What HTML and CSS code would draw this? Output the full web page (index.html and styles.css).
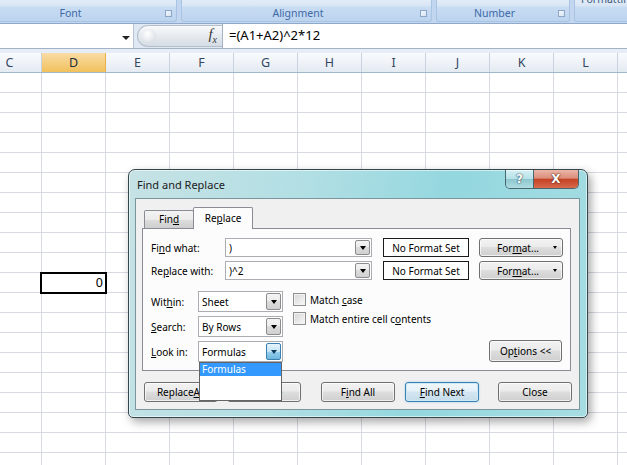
FILE: index.html
```html
<!DOCTYPE html>
<html>
<head>
<meta charset="utf-8">
<title>Find and Replace</title>
<link rel="stylesheet" href="styles.css">
</head>
<body>
<div class="ribbon">
  <div class="group g-font"><span class="glabel">Font</span><span class="launcher"></span></div>
  <div class="group g-align"><span class="glabel">Alignment</span><span class="launcher"></span></div>
  <div class="group g-num"><span class="glabel">Number</span><span class="launcher"></span></div>
  <div class="group g-fmt"><span class="gtop">Formatting</span></div>
</div>
<div class="fbar">
  <div class="namebox"><span class="nb-arrow"></span></div>
  <div class="pill"><span class="knob"></span><span class="fx"><i>f</i><sub>x</sub></span></div>
  <div class="formula">=(A1+A2)^2*12</div>
</div>
<div class="gap"></div>
<div class="headers">
  <div class="ch">C</div><div class="ch sel">D</div><div class="ch">E</div><div class="ch">F</div><div class="ch">G</div><div class="ch">H</div><div class="ch">I</div><div class="ch">J</div><div class="ch">K</div><div class="ch">L</div><div class="ch"></div>
</div>
<div class="sheet">
  <div class="cur-cell">0</div>
</div>

<div class="dialog">
  <div class="titlebar">
    <span class="title">Find and Replace</span>
    <div class="capbtns"><span class="cap help">?</span><span class="cap close">X</span></div>
  </div>
  <div class="client">
    <div class="tabbar">
      <div class="tab">Fin<u>d</u></div>
      <div class="tab tab-on">Re<u>p</u>lace</div>
    </div>
    <div class="panel">
      <div class="fields">
        <span class="lbl">Fi<u>n</u>d what:</span>
        <div class="combo"><span class="val">)</span><span class="dd"></span></div>
        <div class="fmtset">No Format Set</div>
        <div class="btn fmtbtn"><span>For<u>m</u>at...</span><span class="caret"></span></div>
        <span class="lbl">Re<u>p</u>lace with:</span>
        <div class="combo"><span class="val">)^2</span><span class="dd"></span></div>
        <div class="fmtset">No Format Set</div>
        <div class="btn fmtbtn"><span>For<u>m</u>at...</span><span class="caret"></span></div>
      </div>
      <div class="opts">
        <div class="selgrid">
          <span class="lbl">Wit<u>h</u>in:</span>
          <div class="select"><span class="val">Sheet</span><span class="dd"></span></div>
          <span class="lbl"><u>S</u>earch:</span>
          <div class="select"><span class="val">By Rows</span><span class="dd"></span></div>
          <span class="lbl"><u>L</u>ook in:</span>
          <div class="select"><span class="val">Formulas</span><span class="dd hot"></span>
            <div class="droplist"><div class="item hl">Formulas</div></div>
          </div>
        </div>
        <div class="checks">
          <div class="chk"><span class="box"></span><span>Match <u>c</u>ase</span></div>
          <div class="chk"><span class="box"></span><span>Match entire cell c<u>o</u>ntents</span></div>
        </div>
        <div class="btn optbtn">Op<u>t</u>ions &lt;&lt;</div>
      </div>
    </div>
    <div class="actions">
      <div class="btn">Replace <u>A</u>ll</div>
      <div class="btn a2"><u>R</u>eplace</div>
      <div class="btn a3">F<u>i</u>nd All</div>
      <div class="btn a4 dflt"><u>F</u>ind Next</div>
      <div class="btn a5">Close</div>
    </div>
  </div>
</div>
</body>
</html>
```

FILE: styles.css
```css
* { box-sizing: border-box; }
html, body { margin: 0; padding: 0; }
body {
  width: 627px; height: 465px; overflow: hidden; background: #fff;
  font-family: "Noto Sans", "Open Sans", sans-serif;
  display: flex; flex-direction: column; position: relative;
}

/* ---------- ribbon ---------- */
.ribbon {
  height: 24px; flex: none; display: flex; gap: 4px; overflow: hidden;
  background: #c2d7ef; border-bottom: 1px solid #8ea9c9; padding-bottom: 1px;
}
.group {
  height: 22px; flex: none; display: flex; align-items: flex-end;
  border: 1px solid #a9c3e2; border-top: none; border-radius: 0 0 3px 3px;
  background: linear-gradient(#e2ecf8 0, #d8e5f5 6px, #c8dcf2 7px, #bdd4ef 21px);
}
.g-font { margin-left: -19px; width: 196px; }
.g-align { width: 251px; }
.g-num { width: 134px; }
.g-fmt { width: 80px; align-items: flex-start; }
.glabel {
  flex: 1; text-align: center; font-size: 10.5px; color: #3e6aa8;
  line-height: 14px; padding-bottom: 1px;
}
.gtop { font-size: 10.5px; color: #3e5a80; margin-top: -8px; padding-left: 6px; line-height: 14px; }
.launcher {
  flex: none; width: 7px; height: 7px; margin: 0 4px 4px 6px;
  border: 1px solid #8ba6c9; background: linear-gradient(135deg, #f4f8fc, #d6e3f2);
}

/* ---------- formula bar ---------- */
.fbar {
  height: 25px; flex: none; display: flex;
  background: #dfe8f3; border-bottom: 1px solid #a3b3c6;
}
.namebox {
  width: 134px; background: #fff; border-right: 1px solid #b7c5d6;
  display: flex; align-items: center; justify-content: flex-end; padding-right: 3px;
}
.nb-arrow {
  width: 0; height: 0; margin-top: 3px;
  border-left: 4px solid transparent; border-right: 4px solid transparent; border-top: 4px solid #222;
}
.pill {
  width: 85px; margin: 1px 0 1px 3px; border-radius: 11px 0 0 11px;
  background: linear-gradient(#f8f9fb, #e6eaef 50%, #d5dce4);
  border: 1px solid #b3bfcd; border-right: none;
  display: flex; align-items: center; padding-left: 4px;
}
.knob {
  width: 14px; height: 14px; border-radius: 50%;
  background: radial-gradient(circle at 40% 35%, #ffffff, #e3e7ec 60%, #c6ced8);
}
.fx {
  margin-left: auto; margin-right: 5px; font-family: "Liberation Serif", serif;
  font-size: 15px; color: #3a3a3a; line-height: 1;
}
.fx sub { font-size: 10px; font-style: italic; }
.formula {
  flex: 1; background: #fff; border-left: 1px solid #a3b3c6;
  padding-left: 6px; font-size: 13px; line-height: 23px; color: #000;
}
.gap { height: 4px; flex: none; background: #e6edf6; }

/* ---------- column headers ---------- */
.headers {
  height: 20px; flex: none; display: flex; margin-left: -22px; overflow: hidden;
  border-bottom: 1px solid #9eb6ce;
  background: linear-gradient(#f9fbfd, #e4eaf2);
}
.ch {
  width: 64px; flex: none; border-right: 1px solid #c9d3df;
  text-align: center; font-size: 12.5px; line-height: 19px; color: #34465e;
}
.ch.sel {
  background: linear-gradient(#f9dda6, #f1c05c); border-right-color: #e9b04a; color: #1f2d3f;
}

/* ---------- sheet ---------- */
.sheet {
  flex: 1; display: grid;
  grid-template-columns: 42px repeat(9, 64px) 1fr;
  grid-template-rows: repeat(20, 20px);
  background-image:
    linear-gradient(to right, transparent 63px, #d7dbe1 63px),
    linear-gradient(to bottom, transparent 19px, #d7dbe1 19px);
  background-size: 64px 100%, 100% 20px;
  background-position: -22px 0, 0 0;
}
.cur-cell {
  grid-column: 2; grid-row: 11; margin: -1px -1px -1px -2px;
  border: 2px solid #000; background: #fff;
  text-align: right; font-size: 12.5px; line-height: 17px; padding-right: 2px;
}

/* ---------- dialog ---------- */
.dialog {
  position: absolute; left: 128px; top: 169px; width: 460px; height: 249px;
  border: 1px solid #33474d; border-radius: 7px 7px 5px 5px;
  background: linear-gradient(100deg, #c6e2e5 0%, #b2dfe4 35%, #94d7df 65%, #a6dde3 100%);
  box-shadow: inset 0 0 0 1px rgba(255,255,255,.55), 3px 4px 10px rgba(0,0,0,.35);
  padding: 0 7px 7px 6px; display: flex; flex-direction: column;
  font-size: 10px; color: #000;
}
.titlebar { height: 28px; flex: none; display: flex; align-items: flex-start; }
.title { font-size: 11px; line-height: 14px; margin: 8px 0 0 2px; color: #1a1a1a; }
.capbtns {
  margin-left: auto; margin-right: 1px; display: flex; height: 19px;
  border: 1px solid #4a676f; border-top: none; border-radius: 0 0 5px 5px; overflow: hidden;
}
.cap { display: flex; align-items: center; justify-content: center; color: #fff; font-weight: bold; font-family: "DejaVu Sans", sans-serif; }
.help {
  width: 28px; border-right: 1px solid #4a676f; font-size: 12px;
  background: linear-gradient(rgba(255,255,255,.6), rgba(215,238,240,.45) 48%, rgba(130,180,188,.5) 52%, rgba(185,222,227,.65));
  text-shadow: 0 0 2px #2d4b55, 0 0 1px #2d4b55;
}
.close {
  width: 44px; font-size: 12px;
  background: linear-gradient(#ebb6a9, #dc8e7a 45%, #c54226 52%, #d86a4c 100%);
  text-shadow: 0 0 2px #5a1a0e, 0 0 1px #5a1a0e;
}
.client {
  flex: 1; background: #f0f0f0; border: 1px solid #7a959c;
  padding: 0 8px 7px 6px; display: flex; flex-direction: column;
}
.tabbar { height: 29px; flex: none; display: flex; align-items: flex-end; padding-left: 2px; }
.tab {
  height: 18px; width: 50px; border: 1px solid #898c95; border-bottom: none;
  border-radius: 2px 2px 0 0; text-align: center; line-height: 17px;
  background: linear-gradient(#f3f3f3, #ebebeb 50%, #dddddd 50%, #cfcfcf);
}
.tab.tab-on {
  height: 22px; width: 60px; margin-left: -1px; margin-bottom: -1px;
  background: #fcfcfc; position: relative; z-index: 1; line-height: 20px;
}
.panel {
  height: 143px; flex: none; border: 1px solid #898c95; background: #fcfcfc;
  padding: 9px 7px 0 8px;
}
.fields {
  display: grid; grid-template-columns: 74px 147px 97px 94px;
  grid-auto-rows: 19px; row-gap: 4px; align-items: center;
}
.lbl { white-space: nowrap; }
.combo, .select {
  height: 19px; border: 1px solid #abadb3; background: #fff;
  display: flex; align-items: stretch; padding: 1px;
}
.select { height: 21px; position: relative; }
.val { flex: 1; padding-left: 2px; display: flex; align-items: center; white-space: nowrap; }
.dd {
  width: 15px; flex: none; border: 1px solid #8c8c8c; border-radius: 2px;
  background: linear-gradient(#f4f4f4, #ebebeb 50%, #dcdcdc 50%, #d0d0d0);
  display: flex; align-items: center; justify-content: center;
}
.dd::after, .caret {
  content: ""; width: 0; height: 0;
  border-left: 3.5px solid transparent; border-right: 3.5px solid transparent; border-top: 4px solid #000;
}
.dd.hot { border-color: #3c7fb1; background: linear-gradient(#e5f4fc, #c4e5f6 50%, #98d1ef 50%, #6eb6dd); }
.dd.hot::after { border-top-color: #0e3a5a; }
.fmtset {
  justify-self: end; width: 86px; height: 19px; border: 1px solid #1a1a1a; background: #fff;
  display: flex; align-items: center; justify-content: center;
}
.btn {
  display: flex; align-items: center; justify-content: center;
  border: 1px solid #707070; border-radius: 3px;
  background: linear-gradient(#f2f2f2 0%, #ebebeb 45%, #dddddd 50%, #cfcfcf 100%);
  box-shadow: inset 0 0 0 1px rgba(255,255,255,.7);
  white-space: nowrap;
}
.fmtbtn {
  justify-self: end; width: 84px; height: 19px;
  justify-content: space-between; padding: 0 5px 0 17px;
}
.caret { border-left-width: 2.5px; border-right-width: 2.5px; border-top-width: 3px; }
.opts { display: flex; align-items: flex-start; margin-top: 11px; }
.selgrid {
  display: grid; grid-template-columns: 47px 85px;
  grid-auto-rows: 21px; row-gap: 4px; align-items: center;
}
.checks { margin-left: 10px; margin-top: 2px; display: flex; flex-direction: column; gap: 6px; }
.chk { display: flex; align-items: center; gap: 4px; height: 13px; white-space: nowrap; }
.box {
  width: 13px; height: 13px; flex: none; border: 1px solid #8f8f8f;
  background: linear-gradient(135deg, #d6d6d6, #f8f8f8);
  box-shadow: inset 0 0 0 1px #f2f2f2;
}
.optbtn { margin-left: auto; margin-top: 49px; margin-right: 1px; width: 73px; height: 22px; }
.droplist {
  position: absolute; left: 0; right: 0; top: 100%; margin-top: 1px; height: 39px;
  background: #fff; border: 1px solid #646464; z-index: 5;
}
.item { height: 13px; line-height: 13px; padding-left: 2px; }
.item.hl { background: #3399ff; color: #fff; }
.actions { display: flex; margin-top: 11px; padding-left: 2px; height: 20px; flex: none; }
.actions .btn { width: 74px; height: 20px; flex: none; }
.a2 { margin-left: 9px; }
.a3 { margin-left: 20px; }
.a4 { margin-left: 10px; }
.a5 { margin-left: 19px; }
.btn.dflt {
  border-color: #3c7fb1;
  background: linear-gradient(#f1f8fc 0%, #e4f0f8 45%, #d3e5f1 50%, #c6dcea 100%);
  box-shadow: inset 0 0 0 1px #cdeaf9, 0 0 2px #8cc7e9;
}
```
